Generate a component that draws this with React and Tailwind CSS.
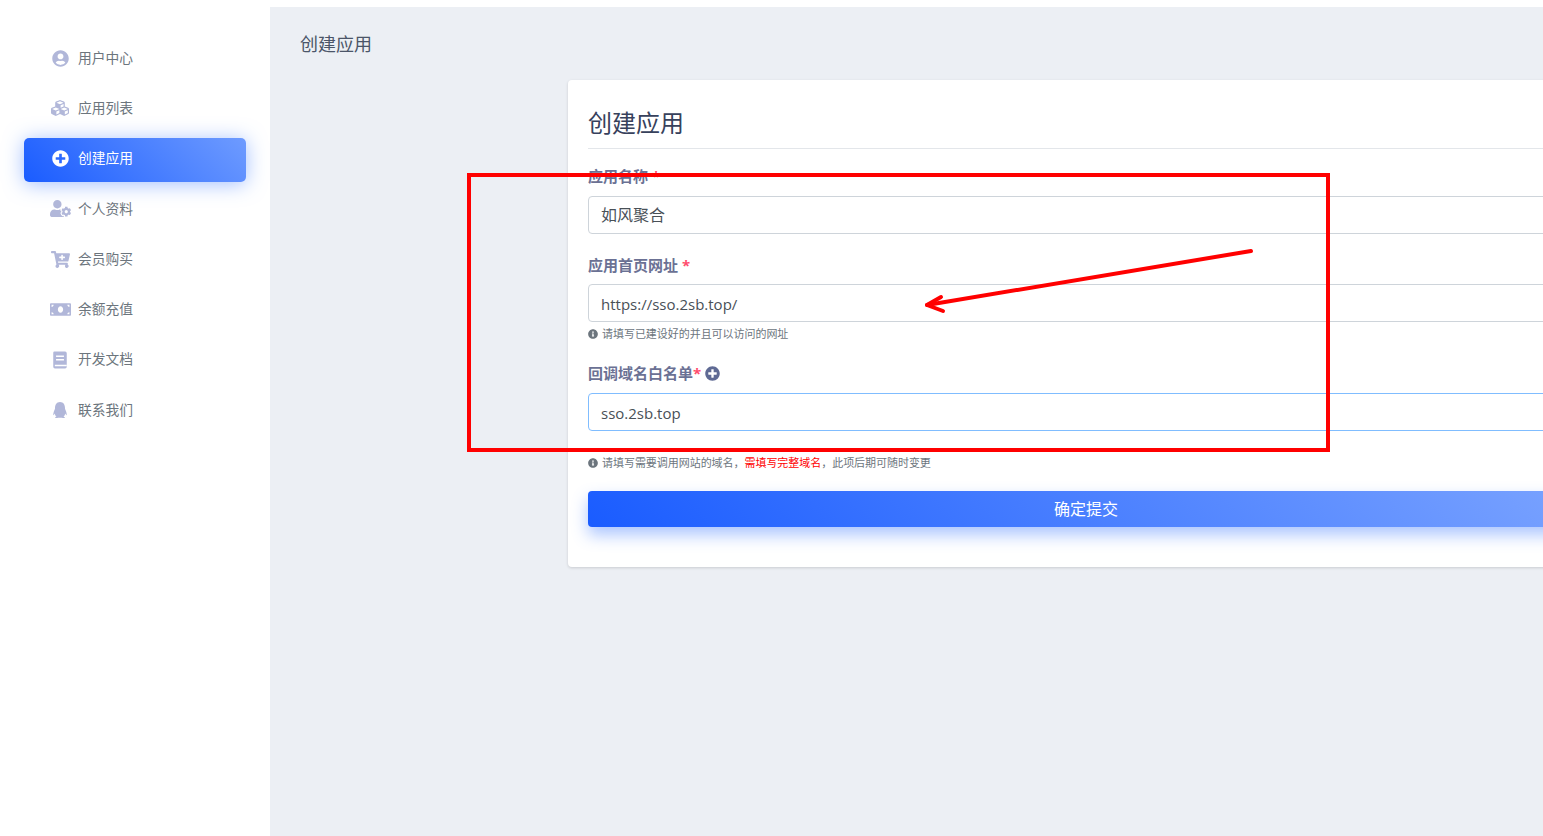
import React from 'react';
import { FaUserCircle, FaCubes, FaPlusCircle, FaUserCog, FaCartPlus, FaMoneyBill, FaQq, FaInfoCircle } from 'react-icons/fa';

const DocIcon = ({ size }) => (
  <svg width={size} height={size} viewBox="0 0 16 16" fill="currentColor">
    <path d="M3 0.5h9.5a1.5 1.5 0 0 1 1.5 1.5v12a1.5 1.5 0 0 1-1.5 1.5H3.5A1.5 1.5 0 0 1 2 14V1.5a1 1 0 0 1 1-1Z" />
    <path d="M4.5 4h7v1.4h-7zM4.5 7h7v1.4h-7zM3.4 12.3H14v1.3H3.4z" fill="#fff" />
  </svg>
);

const menu = [
  { label: '用户中心', icon: FaUserCircle, size: 17 },
  { label: '应用列表', icon: FaCubes, size: 18 },
  { label: '创建应用', icon: FaPlusCircle, size: 17, active: true },
  { label: '个人资料', icon: FaUserCog, size: 21 },
  { label: '会员购买', icon: FaCartPlus, size: 19 },
  { label: '余额充值', icon: FaMoneyBill, size: 21 },
  { label: '开发文档', icon: DocIcon, size: 18 },
  { label: '联系我们', icon: FaQq, size: 16 },
];

const Field = ({ children, focused, latin }) => (
  <div
    className={`h-[38px] rounded-[4px] border px-3 flex items-center text-[#495057] ${
      latin ? 'text-[15px] pt-[2px]' : 'text-base'
    } ${focused ? 'border-[#80bdff]' : 'border-[#ced4da]'}`}
  >
    {children}
  </div>
);

const Help = ({ children, className }) => (
  <div className={`h-4 flex items-center gap-1 text-[11px] tracking-[-0.04px] text-[#6c757d] ${className}`}>
    <FaInfoCircle size={10} className="text-[#6c757d] shrink-0" />
    <span>{children}</span>
  </div>
);

const Label = ({ children, className }) => (
  <div className={`h-[22px] flex items-center text-[15px] font-bold text-[#6b7194] ${className}`}>
    {children}
  </div>
);

const App = () => {
  return (
    <div className="relative h-[836px] w-[1543px] overflow-hidden flex bg-white font-['Open_Sans','Noto_Sans_CJK_SC',sans-serif]">
      {/* Sidebar */}
      <aside className="w-[270px] shrink-0 bg-white px-6 pt-[37px] flex flex-col gap-[6.3px]">
        {menu.map((item) => {
          const Icon = item.icon;
          return (
            <div
              key={item.label}
              className={`h-11 rounded-[5px] pb-[2px] flex items-center text-[13.75px] ${
                item.active
                  ? 'bg-[linear-gradient(45deg,#1a5cff,#6e9bff)] text-white shadow-[0_2px_20px_rgba(70,128,255,0.5)]'
                  : 'text-[#6c757d]'
              }`}
            >
              <span className={`w-[54px] pr-[2px] flex justify-center shrink-0 pl-[20px] ${item.active ? 'text-white' : 'text-[#b1b7d9]'}`}>
                <Icon size={item.size} />
              </span>
              <span>{item.label}</span>
            </div>
          );
        })}
      </aside>

      {/* Main */}
      <main className="flex-1 mt-[7px] bg-[#eceff4] pl-[30px] min-w-0">
        <div className="h-[73px] pt-6 text-lg leading-[26px] text-[#4b5568]">创建应用</div>
        <div className="ml-[268px] w-[1036px] rounded-[4px] bg-white px-5 pt-5 pb-10 shadow-[0_1px_3px_rgba(0,0,0,0.15)]">
          <div className="h-[49px] border-b border-[#e3e6ea] text-2xl leading-[46px] text-[#37415c]">创建应用</div>

          <Label className="mt-4 mb-[9px]">
            应用名称 <span className="ml-1 text-[#ff4d6d]">*</span>
          </Label>
          <Field>如风聚合</Field>

          <Label className="mt-5 mb-2">
            应用首页网址 <span className="ml-1 text-[#ff4d6d]">*</span>
          </Label>
          <Field latin>https://sso.2sb.top/</Field>
          <Help className="mt-1">请填写已建设好的并且可以访问的网址</Help>

          <Label className="mt-5 mb-[9px]">
            回调域名白名单<span className="text-[#ff4d6d]">*</span>
            <FaPlusCircle size={15} className="ml-1 text-[#5f6a94]" />
          </Label>
          <Field focused latin>sso.2sb.top</Field>
          <Help className="mt-6">
            请填写需要调用网站的域名，<span className="text-[#ff0000]">需填写完整域名</span>，此项后期可随时变更
          </Help>

          <div className="mt-5 h-9 rounded-[4px] flex items-center justify-center text-base text-white bg-[linear-gradient(45deg,#1a5cff,#7aa3ff)] shadow-[0_8px_16px_rgba(70,128,255,0.45)]">
            确定提交
          </div>
        </div>
      </main>

      {/* Annotation over the screenshot */}
      <div className="absolute left-[467px] top-[173px] w-[863px] h-[279px] border-4 border-[#ff0000]" />
      <svg className="absolute left-[915px] top-[240px]" width="350" height="80" viewBox="0 0 350 80" fill="none" stroke="#ff0000" strokeWidth="4" strokeLinecap="round" strokeLinejoin="round">
        <path d="M336 11 Q170 38 12 65" />
        <path d="M26 57 L12 65 L28 71" />
      </svg>
    </div>
  );
};

export default App;
